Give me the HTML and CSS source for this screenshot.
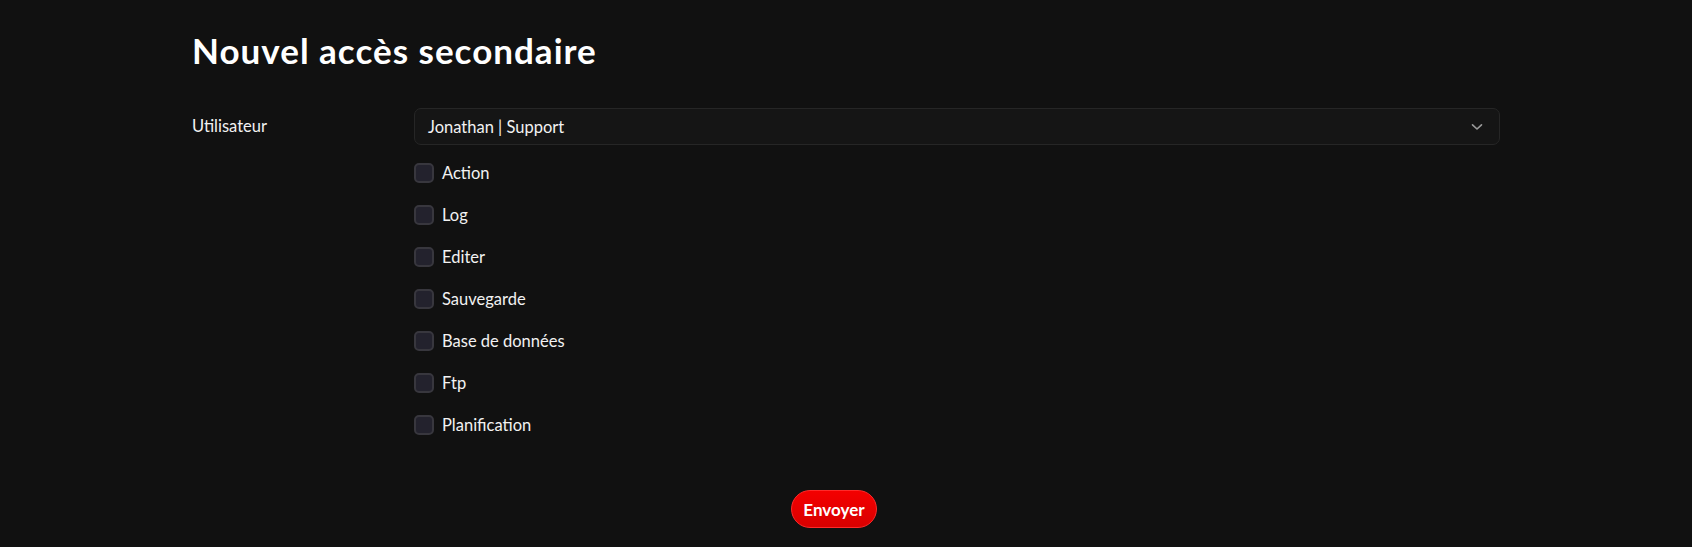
FILE: index.html
```html
<!DOCTYPE html>
<html lang="fr">
<head>
<meta charset="utf-8">
<title>Nouvel accès secondaire</title>
<link rel="stylesheet" href="styles.css">
</head>
<body>
<main class="page">
  <h1 class="title">Nouvel accès secondaire</h1>
  <form class="form">
    <div class="row">
      <label class="label">Utilisateur</label>
      <div class="field">
        <div class="select">
          <span class="select-value">Jonathan | Support</span>
          <svg class="chevron" width="12" height="8" viewBox="0 0 12 8"><path d="M1.5 1.8 L6 6 L10.5 1.8" fill="none" stroke="#9a9a9a" stroke-width="1.6" stroke-linecap="round" stroke-linejoin="round"/></svg>
        </div>
        <ul class="checks">
          <li class="check"><span class="box"></span><span>Action</span></li>
          <li class="check"><span class="box"></span><span>Log</span></li>
          <li class="check"><span class="box"></span><span>Editer</span></li>
          <li class="check"><span class="box"></span><span>Sauvegarde</span></li>
          <li class="check"><span class="box"></span><span>Base de données</span></li>
          <li class="check"><span class="box"></span><span>Ftp</span></li>
          <li class="check"><span class="box"></span><span>Planification</span></li>
        </ul>
      </div>
    </div>
    <div class="actions">
      <button type="button" class="btn">Envoyer</button>
    </div>
  </form>
</main>
</body>
</html>
```
FILE: styles.css
```css
html, body {
  margin: 0;
  padding: 0;
  background: #111111;
  color: #f2f2f2;
  font-family: Lato, "Noto Sans", sans-serif;
}
.page {
  width: 1308px;
  margin: 0 auto;
  padding-top: 30px;
}
.title {
  margin: 0;
  font-size: 35px;
  line-height: 40px;
  font-weight: 700;
  letter-spacing: 1px;
  color: #ffffff;
}
.form {
  margin-top: 38px;
}
.row {
  display: flex;
}
.label {
  width: 222px;
  flex: none;
  font-size: 16.5px;
  line-height: 37px;
}
.field {
  flex: 1;
}
.select {
  height: 37px;
  box-sizing: border-box;
  border: 1px solid #262626;
  border-radius: 7px;
  background: #151515;
  display: flex;
  align-items: center;
  justify-content: space-between;
  padding: 0 16px 0 13px;
  font-size: 16.5px;
}
.chevron {
  display: block;
}
.checks {
  list-style: none;
  margin: 18px 0 0;
  padding: 0;
  display: flex;
  flex-direction: column;
  gap: 22px;
}
.check {
  display: flex;
  align-items: center;
  gap: 8px;
  height: 20px;
  font-size: 16.5px;
}
.box {
  width: 20px;
  height: 20px;
  box-sizing: border-box;
  border: 2px solid #38373e;
  border-radius: 5px;
  background: #23222d;
}
.actions {
  display: flex;
  justify-content: center;
  padding-right: 24px;
  margin-top: 55px;
}
.btn {
  height: 38px;
  width: 86px;
  border-radius: 19px;
  border: 1px solid #ff2a2a;
  background: linear-gradient(#f40000, #d80000);
  color: #fff;
  font-family: inherit;
  font-weight: 700;
  font-size: 17px;
  padding: 0;
}
```
